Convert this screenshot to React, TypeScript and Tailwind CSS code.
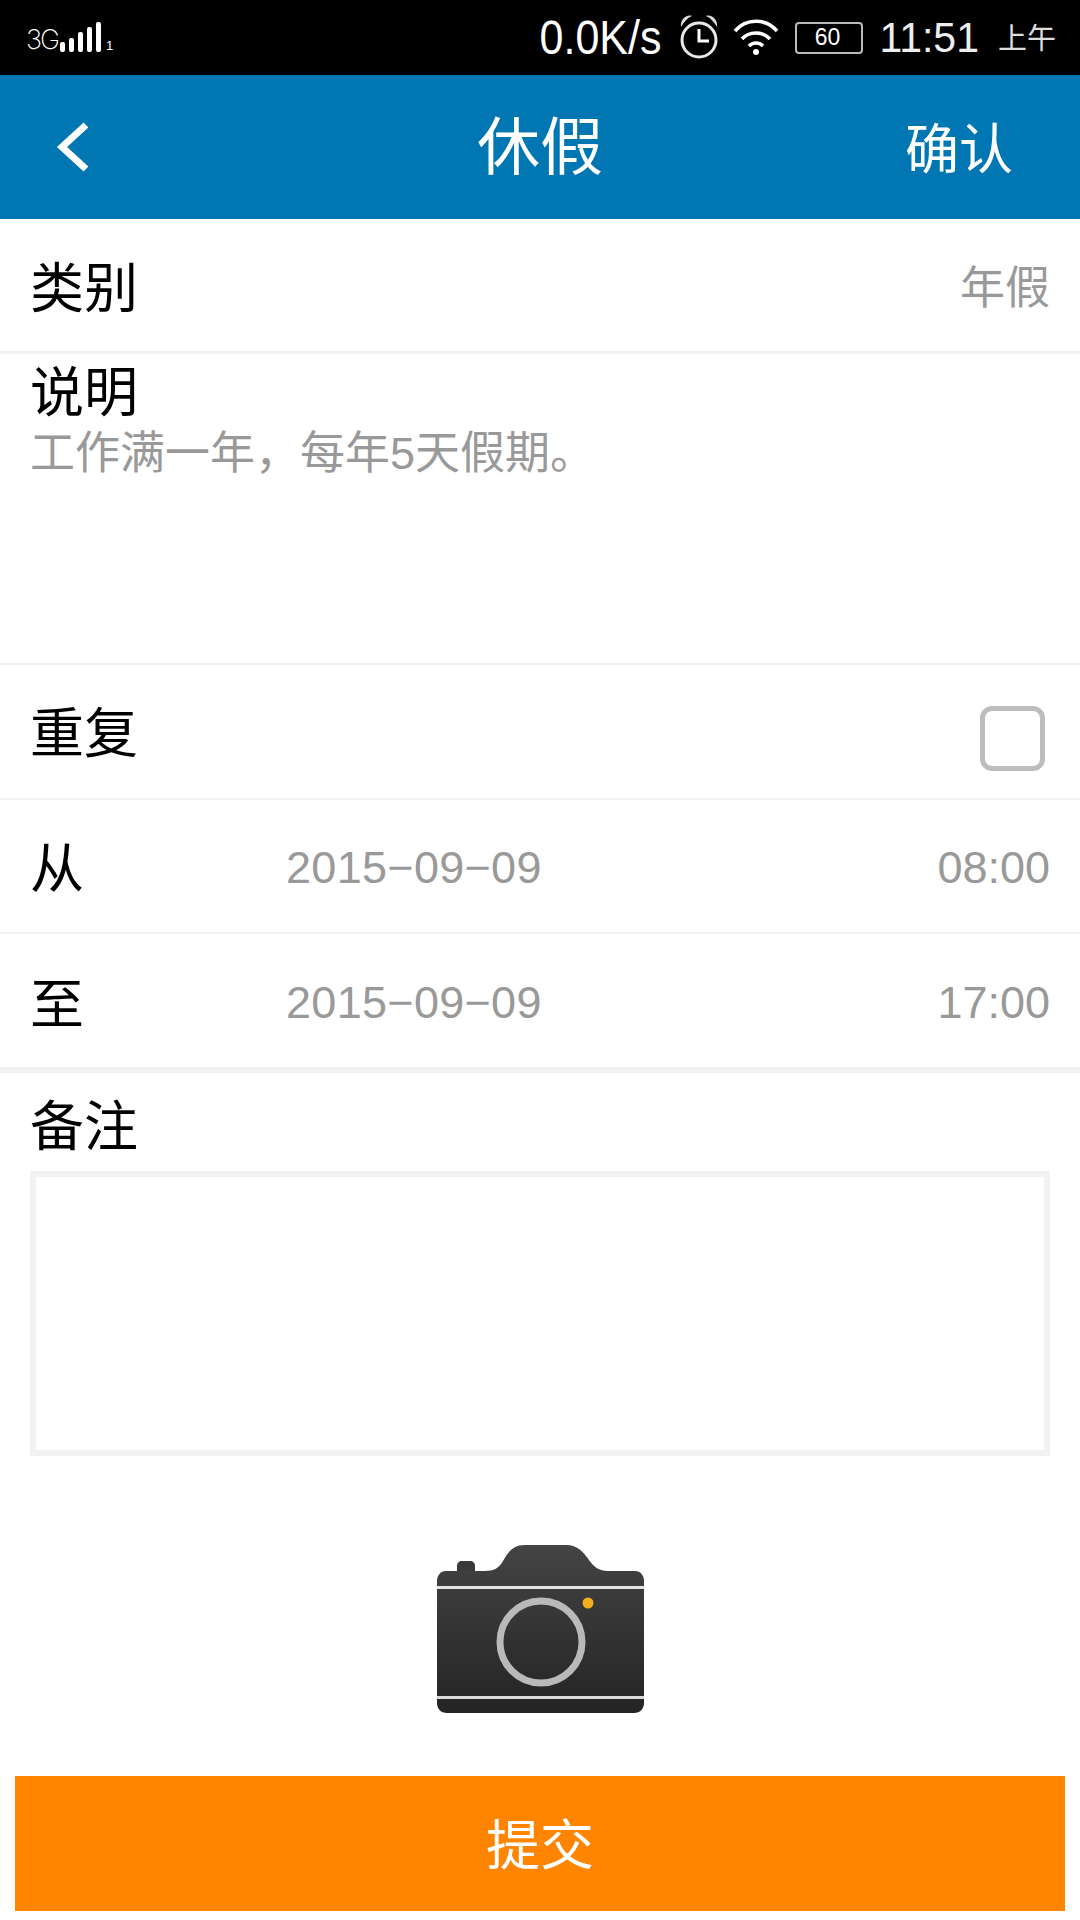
import React from 'react'

const FONT = "font-['Liberation_Sans','Noto_Sans_CJK_SC',sans-serif]"

function Signal() {
  const heights = [10, 14, 20, 25, 30]
  return (
    <div className="flex items-end gap-[4px]">
      {heights.map((h) => (
        <div key={h} className="w-[5px] rounded-[2px] bg-white" style={{ height: h }} />
      ))}
    </div>
  )
}

function Alarm() {
  return (
    <svg width="38" height="46" viewBox="0 0 38 46" fill="none">
      <circle cx="19" cy="26" r="17" stroke="#e8e8e8" strokeWidth="3" />
      <path d="M19 15v12h10" stroke="#fff" strokeWidth="3" />
      <path d="M1 13C0 6 6 0 12 2 7 4 4 8 1 13Z" fill="#ddd" />
      <path d="M37 13C38 6 32 0 26 2 31 4 34 8 37 13Z" fill="#ddd" />
    </svg>
  )
}

function Wifi() {
  return (
    <svg width="46" height="40" viewBox="0 0 46 40" fill="none" stroke="#fff" strokeWidth="3.5">
      <path d="M2 14C13 1 33 1 44 14" />
      <path d="M9 22C16 14 30 14 37 22" />
      <path d="M16 29C20 25 26 25 30 29" />
      <circle cx="23" cy="35" r="3" fill="#fff" stroke="none" />
    </svg>
  )
}

function Camera() {
  return (
    <svg width="207" height="168" viewBox="0 0 207 168">
      <defs>
        <linearGradient id="body" x1="0" y1="0" x2="0" y2="1">
          <stop offset="0" stopColor="#444444" />
          <stop offset="1" stopColor="#242424" />
        </linearGradient>
      </defs>
      <path d="M20 26v-5c0-3 2-5 5-5h8c3 0 5 2 5 5v5Z" fill="#3a3a3a" />
      <path d="M9 26h39c9 0 14-3 18-10 5-9 10-16 22-16h41c12 0 17 7 23 15 5 7 10 11 19 11h27c6 0 9 5 9 10v122c0 6-4 10-10 10H10c-6 0-10-4-10-10V36c0-5 3-10 9-10Z" fill="url(#body)" />
      <rect x="0" y="41" width="207" height="3" fill="#e4e4e4" />
      <rect x="0" y="151" width="207" height="3" fill="#d8d8d8" />
      <circle cx="104" cy="97" r="41" fill="none" stroke="#b9b9b9" strokeWidth="7" />
      <circle cx="151" cy="58" r="5.5" fill="#f2b01e" />
    </svg>
  )
}

function StatusBar() {
  return (
    <div className="h-[75px] bg-black flex items-center pl-[26px] pr-[24px] text-white shrink-0">
      <div className="flex items-end mt-[-1px]">
        <span className="w-[34px] text-[27px] leading-[24px] font-['Inter',sans-serif] font-extralight tracking-[-2px]">3G</span>
        <Signal />
        <span className="text-[13px] leading-[12px] ml-[5px] font-light">1</span>
      </div>
      <div className="ml-auto flex items-center">
        <span className="text-[43px] leading-none scale-y-110 mt-[2px]">0.0K/s</span>
        <div className="ml-[19px] mt-[-2px]"><Alarm /></div>
        <div className="ml-[15px] mt-[-2px]"><Wifi /></div>
        <div className="ml-[16px] w-[68px] h-[32px] border-2 border-[#bbbbbb] rounded-[4px] flex items-center justify-center">
          <span className="text-[23px] leading-none pr-[4px]">60</span>
        </div>
        <span className="ml-[16px] text-[41px] leading-none scale-y-105 text-[#eeeeee]">11:51</span>
        <span className="ml-[19px] text-[29px] leading-none text-[#dddddd] mt-[3px]">上午</span>
      </div>
    </div>
  )
}

function Header() {
  return (
    <header className="relative h-[144px] bg-[#0077b3] flex items-center justify-between pl-[55px] pr-[67px] text-white shrink-0">
      <svg width="36" height="52" viewBox="0 0 36 52" fill="none">
        <path d="M31 4 7 26l24 22" stroke="#fff" strokeWidth="7" />
      </svg>
      <h1 className="absolute left-0 right-0 text-center text-[63px] leading-none font-normal">休假</h1>
      <span className="text-[54px] leading-none pt-[6px]">确认</span>
    </header>
  )
}

function DateValues({ date, time }: { date: string; time: string }) {
  return (
    <>
      <span className="text-[45px] leading-none tracking-[0.3px] text-[#999999]">{date}</span>
      <span className="ml-auto text-[45px] leading-none text-[#999999]">{time}</span>
    </>
  )
}

export default function App() {
  return (
    <div className={`w-[1080px] h-[1920px] bg-white flex flex-col overflow-hidden ${FONT}`}>
      <StatusBar />
      <Header />

      <div className="h-[135px] flex items-center justify-between px-[30px] border-b-[3px] border-[#f2f2f2] shrink-0">
        <span className="text-[54px] leading-none text-black pt-[8px]">类别</span>
        <span className="text-[45px] leading-none text-[#999999] pt-[6px]">年假</span>
      </div>

      <div className="h-[311px] px-[30px] pt-[9px] border-b-[2px] border-[#f2f2f2] shrink-0">
        <div className="text-[54px] leading-[60px] text-black">说明</div>
        <div className="text-[45px] leading-[46px] mt-[8px] text-[#999999]">工作满一年，每年5天假期。</div>
      </div>

      <div className="h-[135px] flex items-center justify-between pl-[30px] pr-[35px] border-b-[2px] border-[#f2f2f2] shrink-0">
        <span className="text-[54px] leading-none text-black pt-[4px]">重复</span>
        <div className="w-[65px] h-[65px] mt-[14px] rounded-[12px] border-[5px] border-[#bdbdbd] bg-white" />
      </div>

      <div className="h-[134px] flex items-center px-[30px] pt-[2px] border-b-[2px] border-[#f2f2f2] shrink-0">
        <span className="w-[256px] text-[54px] leading-none text-black pt-[4px]">从</span>
        <DateValues date="2015−09−09" time="08:00" />
      </div>

      <div className="h-[139px] flex items-center px-[30px] pt-[4px] border-b-[6px] border-[#f2f2f2] shrink-0">
        <span className="w-[256px] text-[54px] leading-none text-black pt-[4px]">至</span>
        <DateValues date="2015−09−09" time="17:00" />
      </div>

      <div className="px-[30px] pt-[16px] shrink-0">
        <div className="text-[54px] leading-[76px] text-black">备注</div>
        <div className="mt-[6px] h-[285px] border-[6px] border-[#f2f2f2]" />
      </div>

      <div className="mt-[89px] flex justify-center shrink-0">
        <Camera />
      </div>

      <div className="mt-[63px] mx-[15px] h-[135px] bg-[#ff8400] flex items-center justify-center pt-[4px] shrink-0">
        <span className="text-[54px] leading-none text-white">提交</span>
      </div>
    </div>
  )
}
